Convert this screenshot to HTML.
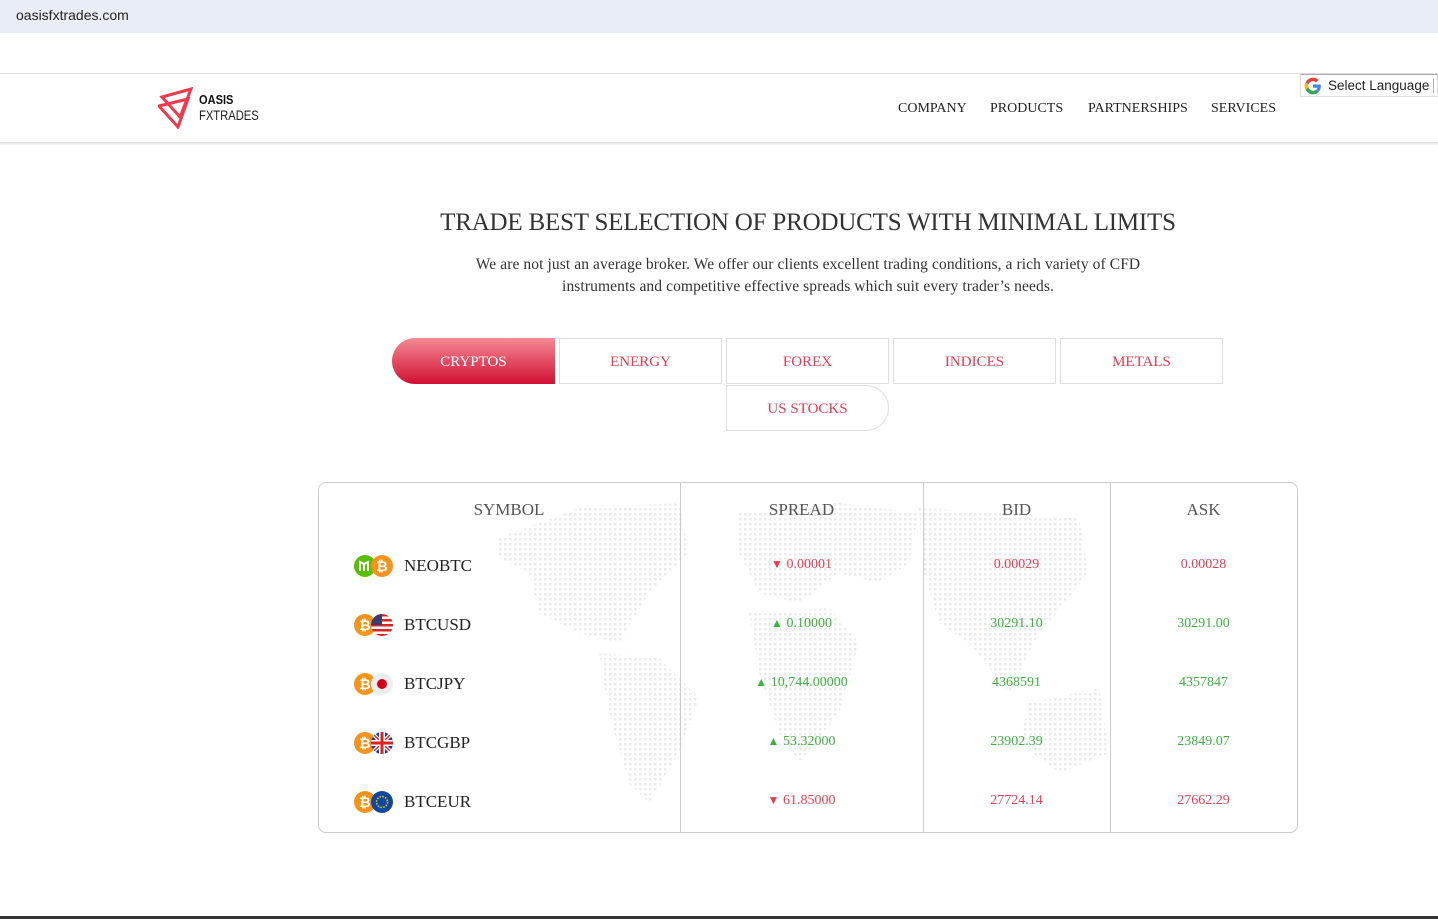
<!DOCTYPE html>
<html><head><meta charset="utf-8"><style>
*{margin:0;padding:0;box-sizing:border-box}
body{width:1438px;height:919px;overflow:hidden;background:#fff;font-family:"Liberation Serif",serif;position:relative}
.abs{position:absolute}
.nav a{position:absolute;top:101px;font-size:14px;color:#222;text-decoration:none}
.tab{position:absolute;height:46px;width:163px;border:1px solid #ddd;color:#e8394f;font-size:15px;display:flex;align-items:center;justify-content:center;background:#fff;padding-top:2px}
.hd{position:absolute;top:500px;font-size:17px;color:#555;text-align:center}
.c{position:absolute;font-size:14px;text-align:center}
.r{color:#ee3a4e}.g{color:#3fb13f}
.c span{font-size:12px}
.sym{position:absolute;left:404px;font-size:17px;color:#222}
.ic{position:absolute;left:354px;width:40px;height:22px}
</style></head><body>
<div class="abs" style="left:0;top:0;width:1438px;height:33px;background:#e9eef6"></div>
<div class="abs" style="left:16px;top:7px;font-family:'Liberation Sans',sans-serif;font-size:14px;color:#222">oasisfxtrades.com</div>
<div class="abs" style="left:0;top:73px;width:1438px;height:1px;background:#ddd"></div>
<div class="abs" style="left:0;top:142px;width:1438px;height:3px;background:linear-gradient(#ddd,#f6f6f6)"></div>
<svg class="abs" style="left:158px;top:87px" width="44" height="42" viewBox="0 0 44 42">
<g fill="none" stroke="#ee3a4e" stroke-width="3"><path d="M4 10 L33 2 L22 30 Z"/><path d="M1 19 L30 12 L20 40 Z"/></g></svg>
<div class="abs" style="left:199px;top:92px;font-family:'Liberation Sans',sans-serif;font-weight:bold;font-size:13px;color:#111;transform:scaleX(0.85);transform-origin:left">OASIS</div>
<div class="abs" style="left:199px;top:107px;font-family:'Liberation Sans',sans-serif;font-size:14px;color:#222;transform:scaleX(0.8);transform-origin:left">FXTRADES</div>
<div class="nav"><a style="left:898px">COMPANY</a><a style="left:990px">PRODUCTS</a><a style="left:1088px">PARTNERSHIPS</a><a style="left:1211px">SERVICES</a></div>
<div class="abs" style="left:1300px;top:74px;width:138px;height:23px;border:1px solid #ddd;border-top:1px solid #aaa;background:#fff"></div>
<svg class="abs" style="left:1304px;top:77px" width="18" height="18" viewBox="0 0 48 48"><path fill="#4285F4" d="M44.5 20H24v8.5h11.8C34.7 33.9 30.1 37 24 37c-7.2 0-13-5.8-13-13s5.8-13 13-13c3.1 0 5.9 1.1 8.1 2.9l6.4-6.4C34.6 4.1 29.6 2 24 2 11.8 2 2 11.8 2 24s9.8 22 22 22c11 0 21-8 21-22 0-1.3-.2-2.7-.5-4z"/><path fill="#EA4335" d="M5.3 13.7l7 5.1C14.1 14.3 18.7 11 24 11c3.1 0 5.9 1.1 8.1 2.9l6.4-6.4C34.6 4.1 29.6 2 24 2 15.6 2 8.4 6.7 5.3 13.7z"/><path fill="#FBBC05" d="M2 24c0 3.7.9 7.1 2.5 10.1l7.3-5.7C11.3 27 11 25.5 11 24s.3-3 .8-4.4l-7-5.1C3 17.3 2 20.6 2 24z"/><path fill="#34A853" d="M24 46c5.5 0 10.5-1.9 14.4-5.1l-7-5.7C29.3 36.4 26.8 37 24 37c-5.7 0-10.6-3.7-12.3-8.9l-7.3 5.7C8.1 41.1 15.5 46 24 46z"/></svg>
<div class="abs" style="left:1328px;top:78px;font-family:'Liberation Sans',sans-serif;font-size:13.5px;color:#222">Select Language</div>
<div class="abs" style="left:1433px;top:79px;width:1px;height:14px;background:#aaa"></div>

<div class="abs" style="left:0;width:1438px;top:209px;text-align:center;padding-left:178px;font-size:25px;color:#333;letter-spacing:-0.2px">TRADE BEST SELECTION OF PRODUCTS WITH MINIMAL LIMITS</div>
<div class="abs" style="left:440px;width:736px;top:254px;text-align:center;font-size:15.5px;line-height:22px;color:#333;letter-spacing:0.1px">We are not just an average broker. We offer our clients excellent trading conditions, a rich variety of CFD instruments and competitive effective spreads which suit every trader’s needs.</div>

<div class="tab" style="left:392px;top:338px;border-radius:23px 0 0 23px;border:none;background:linear-gradient(#f58a95,#d10f32);color:#fff">CRYPTOS</div>
<div class="tab" style="left:559px;top:338px">ENERGY</div>
<div class="tab" style="left:726px;top:338px">FOREX</div>
<div class="tab" style="left:893px;top:338px">INDICES</div>
<div class="tab" style="left:1060px;top:338px">METALS</div>
<div class="tab" style="left:726px;top:385px;border-radius:0 23px 23px 0">US STOCKS</div>

<div class="abs" style="left:318px;top:482px;width:980px;height:351px;border:1px solid #ccc;border-radius:8px"></div>
<svg class="abs" style="left:319px;top:483px" width="978" height="349">
<defs><pattern id="d" width="5" height="5" patternUnits="userSpaceOnUse"><rect width="2.5" height="2.5" fill="#ebebeb"/></pattern></defs>
<g fill="url(#d)">
<path d="M180 55 L260 25 L360 20 L370 70 L330 110 L300 160 L260 150 L220 130 L210 90 L180 75Z"/>
<path d="M280 170 L340 175 L380 215 L360 270 L330 320 L310 300 L290 230Z"/>
<path d="M420 30 L520 20 L600 30 L590 80 L560 100 L520 90 L480 120 L440 110 L420 70Z"/>
<path d="M430 130 L510 125 L540 160 L520 230 L480 280 L460 250 L440 190Z"/>
<path d="M600 25 L760 35 L770 90 L720 150 L690 210 L650 160 L620 140 L605 90Z"/>
<path d="M710 220 L780 205 L790 270 L740 290 L700 260Z"/>
</g></svg>
<div class="abs" style="left:680px;top:483px;width:1px;height:349px;background:#ccc"></div>
<div class="abs" style="left:923px;top:483px;width:1px;height:349px;background:#ccc"></div>
<div class="abs" style="left:1110px;top:483px;width:1px;height:349px;background:#ccc"></div>
<div class="hd" style="left:319px;width:380px">SYMBOL</div>
<div class="hd" style="left:680px;width:243px">SPREAD</div>
<div class="hd" style="left:923px;width:187px">BID</div>
<div class="hd" style="left:1110px;width:187px">ASK</div>

<svg class="ic" style="top:555px"><circle cx="11" cy="11" r="11" fill="#58bf00"/><path d="M6 16V7l4 2v7M10 9l4-2v9" stroke="#fff" stroke-width="2" fill="none"/><circle cx="28" cy="11" r="11" fill="#f7931a"/><text x="28" y="16" font-size="14" font-weight="bold" fill="#fff" text-anchor="middle" font-family="Liberation Sans">₿</text></svg>
<svg class="ic" style="top:614px"><circle cx="11" cy="11" r="11" fill="#f7931a"/><text x="11" y="16" font-size="14" font-weight="bold" fill="#fff" text-anchor="middle" font-family="Liberation Sans">₿</text><clipPath id="u"><circle cx="28" cy="11" r="11"/></clipPath><g clip-path="url(#u)"><rect x="17" y="0" width="22" height="22" fill="#fff"/><g fill="#d22"><rect x="17" y="0" width="22" height="2.5"/><rect x="17" y="5" width="22" height="2.5"/><rect x="17" y="10" width="22" height="2.5"/><rect x="17" y="15" width="22" height="2.5"/><rect x="17" y="20" width="22" height="2.5"/></g><rect x="17" y="0" width="11" height="11" fill="#3c3b6e"/></g></svg>
<svg class="ic" style="top:673px"><circle cx="11" cy="11" r="11" fill="#f7931a"/><text x="11" y="16" font-size="14" font-weight="bold" fill="#fff" text-anchor="middle" font-family="Liberation Sans">₿</text><circle cx="28" cy="11" r="11" fill="#eee"/><circle cx="28" cy="11" r="5" fill="#d0021b"/></svg>
<svg class="ic" style="top:732px"><circle cx="11" cy="11" r="11" fill="#f7931a"/><text x="11" y="16" font-size="14" font-weight="bold" fill="#fff" text-anchor="middle" font-family="Liberation Sans">₿</text><clipPath id="k"><circle cx="28" cy="11" r="11"/></clipPath><g clip-path="url(#k)"><rect x="17" width="22" height="22" fill="#1a3a8a"/><path d="M17 0L39 22M39 0L17 22" stroke="#fff" stroke-width="4"/><path d="M17 0L39 22M39 0L17 22" stroke="#d22" stroke-width="1.5"/><path d="M28 0V22M17 11H39" stroke="#fff" stroke-width="6"/><path d="M28 0V22M17 11H39" stroke="#d22" stroke-width="3"/></g></svg>
<svg class="ic" style="top:791px"><circle cx="11" cy="11" r="11" fill="#f7931a"/><text x="11" y="16" font-size="14" font-weight="bold" fill="#fff" text-anchor="middle" font-family="Liberation Sans">₿</text><circle cx="28" cy="11" r="11" fill="#0d47a1"/><circle cx="28" cy="11" r="5.5" fill="none" stroke="#fc0" stroke-width="1.5" stroke-dasharray="1.5 1.4"/></svg>
<div class="sym" style="top:556px">NEOBTC</div>
<div class="sym" style="top:615px">BTCUSD</div>
<div class="sym" style="top:674px">BTCJPY</div>
<div class="sym" style="top:733px">BTCGBP</div>
<div class="sym" style="top:792px">BTCEUR</div>

<div class="c r" style="left:680px;width:243px;top:557px"><span>▼</span> 0.00001</div>
<div class="c g" style="left:680px;width:243px;top:616px"><span>▲</span> 0.10000</div>
<div class="c g" style="left:680px;width:243px;top:675px"><span>▲</span> 10,744.00000</div>
<div class="c g" style="left:680px;width:243px;top:734px"><span>▲</span> 53.32000</div>
<div class="c r" style="left:680px;width:243px;top:793px"><span>▼</span> 61.85000</div>

<div class="c r" style="left:923px;width:187px;top:557px">0.00029</div>
<div class="c g" style="left:923px;width:187px;top:616px">30291.10</div>
<div class="c g" style="left:923px;width:187px;top:675px">4368591</div>
<div class="c g" style="left:923px;width:187px;top:734px">23902.39</div>
<div class="c r" style="left:923px;width:187px;top:793px">27724.14</div>

<div class="c r" style="left:1110px;width:187px;top:557px">0.00028</div>
<div class="c g" style="left:1110px;width:187px;top:616px">30291.00</div>
<div class="c g" style="left:1110px;width:187px;top:675px">4357847</div>
<div class="c g" style="left:1110px;width:187px;top:734px">23849.07</div>
<div class="c r" style="left:1110px;width:187px;top:793px">27662.29</div>

<div class="abs" style="left:0;top:916px;width:1438px;height:3px;background:#333"></div>
</body></html>
